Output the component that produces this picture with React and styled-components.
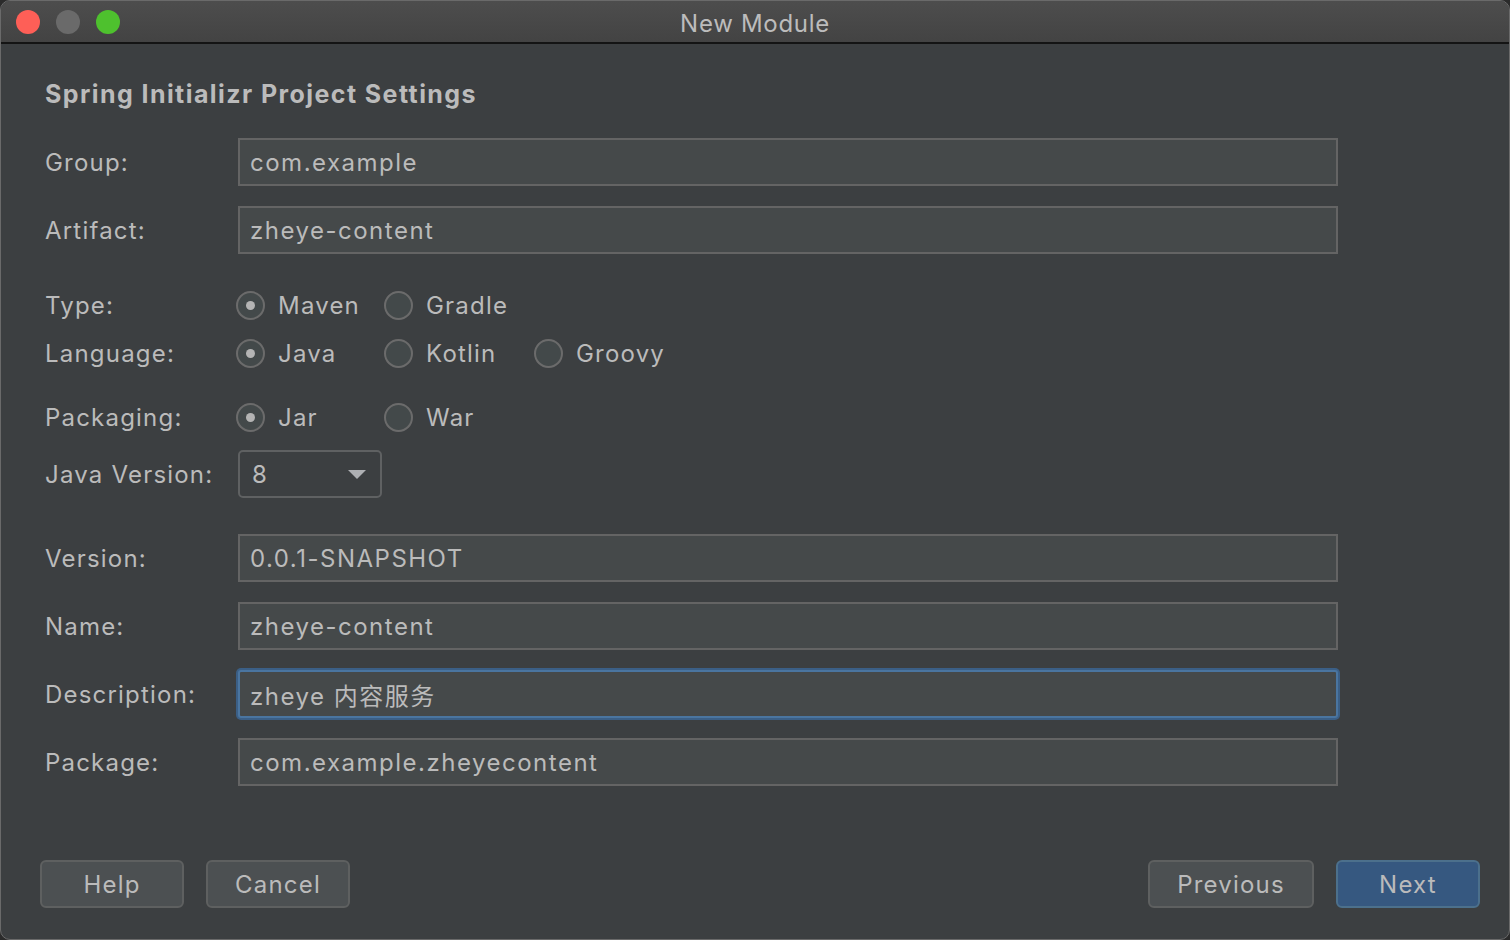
import React from 'react';
import styled, { createGlobalStyle } from 'styled-components';

const GlobalStyle = createGlobalStyle`
	html, body {
		margin: 0;
		padding: 0;
		background: #2b2b2b;
	}
	* {
		box-sizing: border-box;
	}
`;

const Window = styled.div`
	width: 1510px;
	height: 940px;
	display: flex;
	flex-direction: column;
	background-color: #3c3f41;
	border: 1px solid #6a6a6a;
	border-radius: 10px;
	overflow: hidden;
	font-family: Inter, 'Noto Sans CJK SC', sans-serif;
	color: #bbbbbb;
`;

const TitleBar = styled.div`
	position: relative;
	height: 43px;
	flex: 0 0 43px;
	display: flex;
	align-items: center;
	justify-content: center;
	padding-top: 3px;
	background: linear-gradient(#4d4d4d, #434343);
	border-bottom: 2px solid #141414;
`;

const Lights = styled.div`
	position: absolute;
	left: 15px;
	top: 9px;
	display: flex;
	gap: 16px;
`;

const Light = styled.span`
	width: 24px;
	height: 24px;
	border-radius: 50%;
	background-color: ${p => p.$color};
`;

const WindowTitle = styled.span`
	font-size: 24px;
	color: #bcbcbc;
	letter-spacing: 0.7px;
`;

const Content = styled.div`
	flex: 1;
	display: flex;
	flex-direction: column;
	padding: 35px 171px 0 44px;
`;

const Heading = styled.h1`
	margin: 0;
	height: 30px;
	line-height: 30px;
	font-size: 25px;
	font-weight: 700;
	letter-spacing: 1.42px;
	color: #bbbbbb;
`;

const Row = styled.div`
	display: flex;
	align-items: center;
	height: 48px;
	margin-top: ${p => p.$mt || 0}px;
`;

const Label = styled.span`
	flex: 0 0 193px;
	font-size: 24px;
	letter-spacing: 1.2px;
`;

const Field = styled.div`
	flex: 1;
	height: 48px;
	display: flex;
	align-items: center;
	padding: 0 10px;
	background-color: #45494a;
	border: 2px solid ${p => (p.$focused ? '#4a75a0' : '#646464')};
	border-radius: ${p => (p.$focused ? '3px' : '0')};
	box-shadow: ${p => (p.$focused ? '0 0 0 2px #3b5f86' : 'none')};
	font-size: 24px;
	letter-spacing: 1.5px;
	color: #bbbbbb;
`;

const Radios = styled.div`
	display: grid;
	grid-template-columns: 148px 150px 150px;
	margin-left: -2px;
`;

const RadioItem = styled.label`
	display: flex;
	align-items: center;
	gap: 13px;
	font-size: 24px;
	letter-spacing: 1.2px;
`;

const RadioCircle = styled.span`
	flex: 0 0 29px;
	height: 29px;
	border-radius: 50%;
	border: 2px solid #6b6b6b;
	background-color: #43494a;
	display: flex;
	align-items: center;
	justify-content: center;
	&::after {
		content: '';
		display: ${p => (p.$checked ? 'block' : 'none')};
		width: 9px;
		height: 9px;
		border-radius: 50%;
		background-color: #b4b4b4;
	}
`;

const Select = styled.div`
	width: 144px;
	height: 48px;
	display: flex;
	align-items: center;
	justify-content: space-between;
	padding: 0 14px 0 12px;
	border: 2px solid #5f6162;
	border-radius: 5px;
	background-color: #3c3f41;
	font-size: 24px;
`;

const Arrow = styled.span`
	width: 0;
	height: 0;
	border-left: 9px solid transparent;
	border-right: 9px solid transparent;
	border-top: 9px solid #aeb0b3;
`;

const Footer = styled.div`
	display: flex;
	align-items: center;
	padding: 0 29px 31px 39px;
	gap: 22px;
`;

const Spacer = styled.div`
	flex: 1;
`;

const Button = styled.button`
	width: ${p => p.$w || 144}px;
	height: 48px;
	border-radius: 6px;
	border: 2px solid ${p => (p.$primary ? '#4c708c' : '#5e6060')};
	background-color: ${p => (p.$primary ? '#365880' : '#4c5052')};
	color: #bbbbbb;
	font-family: Inter, sans-serif;
	font-size: 24px;
	letter-spacing: 1.2px;
	padding: 0;
`;

const Radio = ({ checked, children }) => (
	<RadioItem>
		<RadioCircle $checked={checked} />
		{children}
	</RadioItem>
);

const App = () => (
	<>
		<GlobalStyle />
		<Window>
			<TitleBar>
				<Lights>
					<Light $color="#fe5f57" />
					<Light $color="#6a6a6a" />
					<Light $color="#4ec12e" />
				</Lights>
				<WindowTitle>New Module</WindowTitle>
			</TitleBar>
			<Content>
				<Heading>Spring Initializr Project Settings</Heading>
				<Row $mt={29}>
					<Label>Group:</Label>
					<Field>com.example</Field>
				</Row>
				<Row $mt={20}>
					<Label>Artifact:</Label>
					<Field>zheye-content</Field>
				</Row>
				<Row $mt={27}>
					<Label>Type:</Label>
					<Radios>
						<Radio checked>Maven</Radio>
						<Radio>Gradle</Radio>
					</Radios>
				</Row>
				<Row>
					<Label>Language:</Label>
					<Radios>
						<Radio checked>Java</Radio>
						<Radio>Kotlin</Radio>
						<Radio>Groovy</Radio>
					</Radios>
				</Row>
				<Row $mt={16}>
					<Label>Packaging:</Label>
					<Radios>
						<Radio checked>Jar</Radio>
						<Radio>War</Radio>
					</Radios>
				</Row>
				<Row $mt={9}>
					<Label>Java Version:</Label>
					<Select>
						8
						<Arrow />
					</Select>
				</Row>
				<Row $mt={36}>
					<Label>Version:</Label>
					<Field>0.0.1-SNAPSHOT</Field>
				</Row>
				<Row $mt={20}>
					<Label>Name:</Label>
					<Field>zheye-content</Field>
				</Row>
				<Row $mt={20}>
					<Label>Description:</Label>
					<Field $focused>zheye 内容服务</Field>
				</Row>
				<Row $mt={20}>
					<Label>Package:</Label>
					<Field>com.example.zheyecontent</Field>
				</Row>
			</Content>
			<Footer>
				<Button>Help</Button>
				<Button>Cancel</Button>
				<Spacer />
				<Button $w={166}>Previous</Button>
				<Button $primary>Next</Button>
			</Footer>
		</Window>
	</>
);

export default App;
